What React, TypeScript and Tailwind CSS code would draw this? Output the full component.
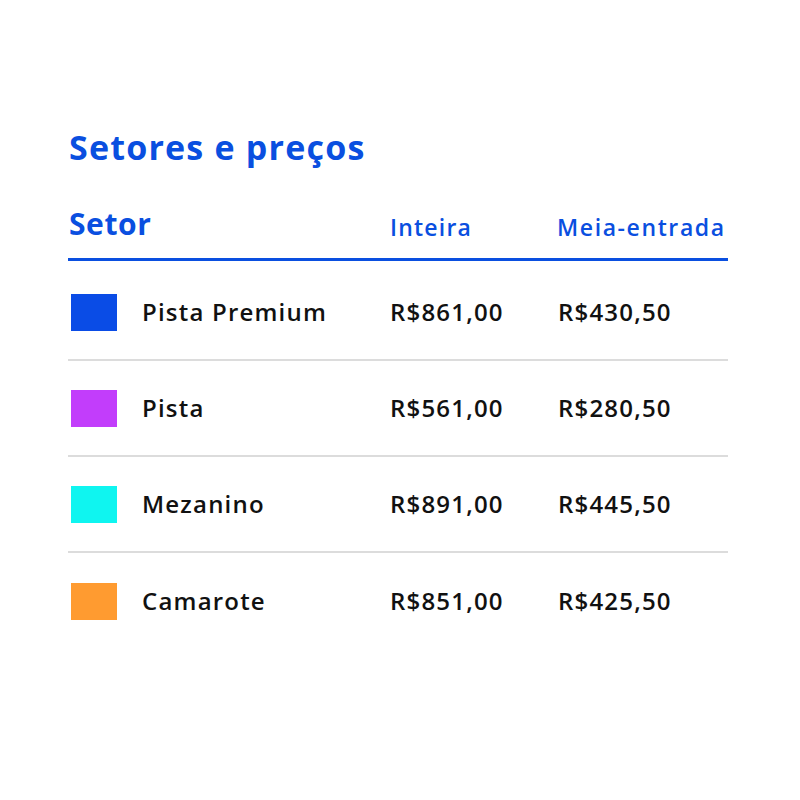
const sectors = [
  { name: "Pista Premium", color: "bg-[#0a4ce6]", full: "R$861,00", half: "R$430,50" },
  { name: "Pista", color: "bg-[#c23dfb]", full: "R$561,00", half: "R$280,50" },
  { name: "Mezanino", color: "bg-[#0ff5f0]", full: "R$891,00", half: "R$445,50" },
  { name: "Camarote", color: "bg-[#ff9b30]", full: "R$851,00", half: "R$425,50" },
];

export default function App() {
  return (
    <div className="h-[800px] w-[800px] bg-white pl-[68px] pt-[126px] font-['Open_Sans',sans-serif]">
      <div className="w-[660px]">
        <h2 className="pl-[1px] text-[34px] font-bold leading-[42px] tracking-[1.2px] text-[#0a4fe0]">
          Setores e preços
        </h2>

        <div className="mt-[38px] grid grid-cols-[322px_167px_1fr] items-end border-b-[3px] border-[#0a4fe0] pb-[16px] text-[#0a4fe0]">
          <span className="pl-[1px] text-[30px] font-bold leading-[36px] tracking-[0.6px]">Setor</span>
          <span className="text-[23px] font-semibold leading-[30px] tracking-[1.2px]">Inteira</span>
          <span className="text-[23px] font-semibold leading-[30px] tracking-[1.6px]">Meia-entrada</span>
        </div>

        <div className="pt-[4px]">
          {sectors.map((s, i) => (
            <div
              key={s.name}
              className={
                "grid h-[96px] grid-cols-[322px_168px_1fr] items-center text-[24px] font-semibold tracking-[1.2px] text-[#111] " +
                (i < sectors.length - 1 ? "border-b-2 border-[#dcdcdc]" : "")
              }
            >
              <div className="flex items-center gap-[25px] pl-[3px]">
                <span className={"h-[37px] w-[46px] " + s.color} />
                <span>{s.name}</span>
              </div>
              <span>{s.full}</span>
              <span>{s.half}</span>
            </div>
          ))}
        </div>
      </div>
    </div>
  );
}
